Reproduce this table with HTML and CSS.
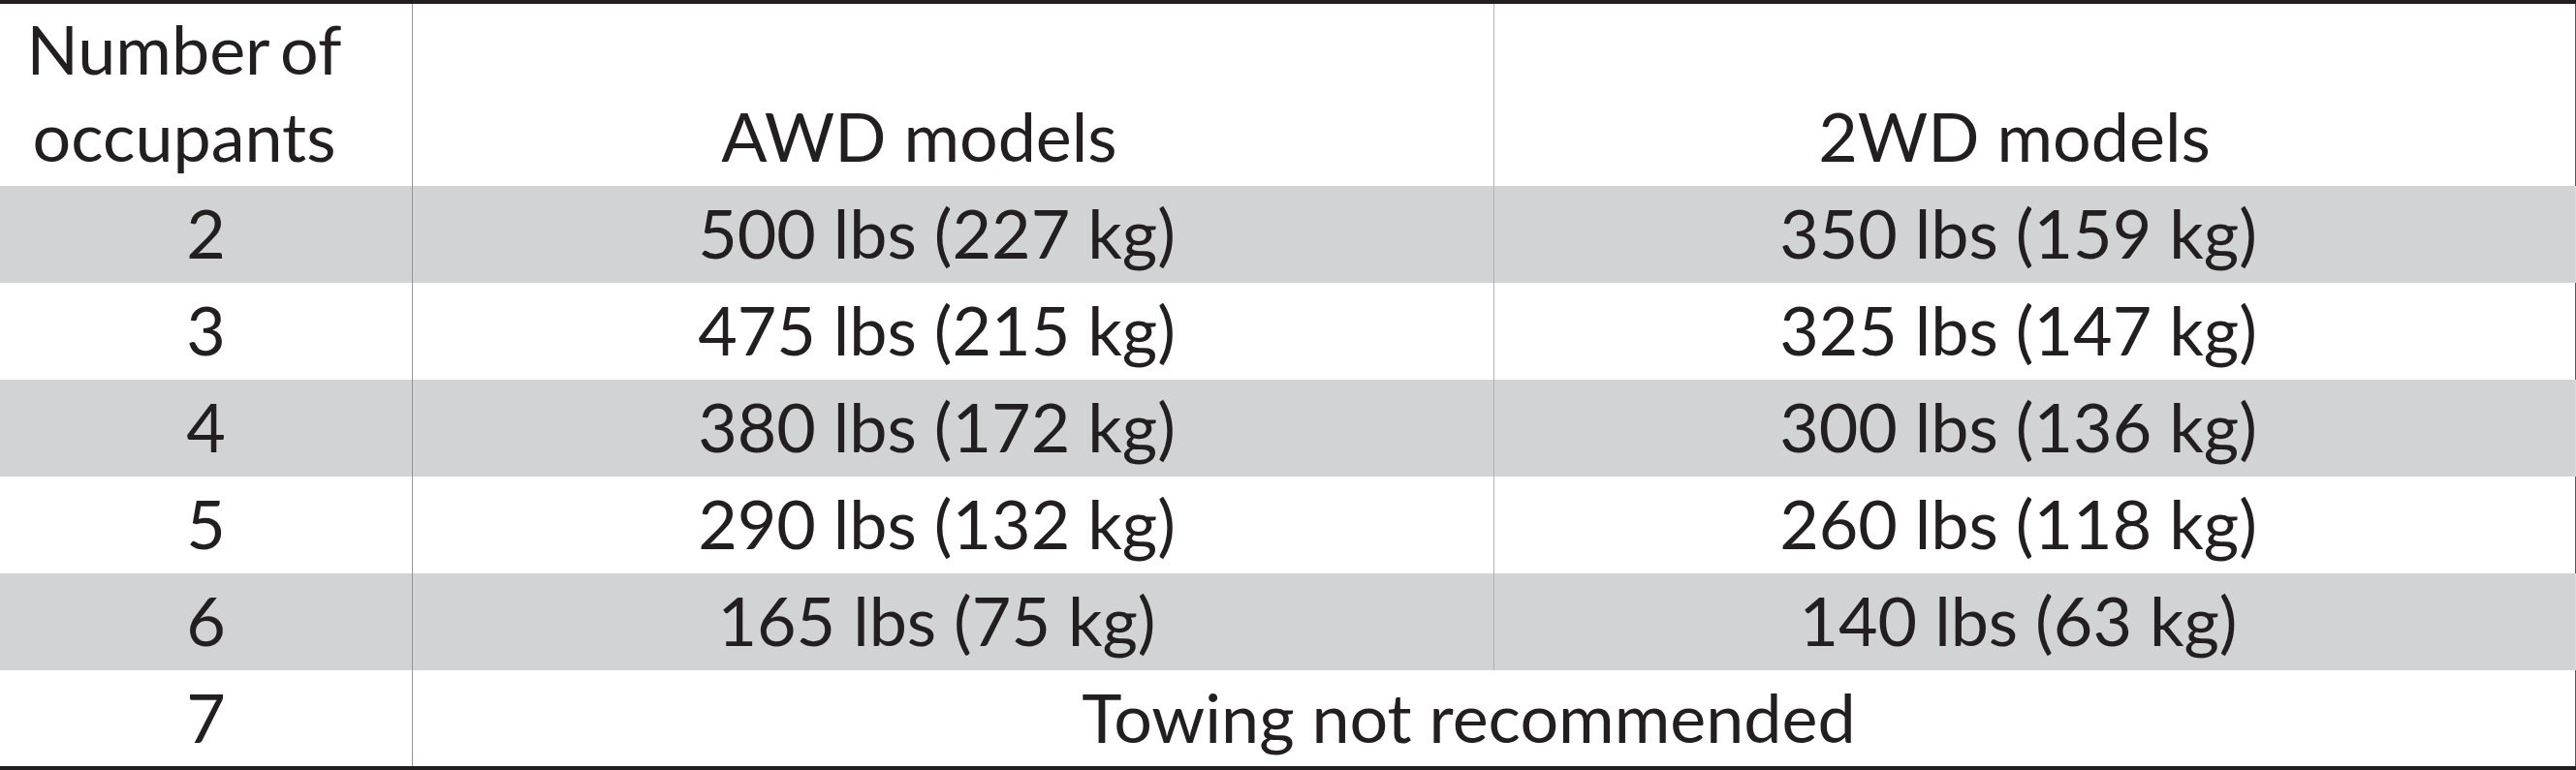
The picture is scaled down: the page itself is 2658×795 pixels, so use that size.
FILE: index.html
```html
<!DOCTYPE html>
<html lang="en">

<head>
  <meta charset="UTF-8">
  <meta name="viewport" content="width=device-width, initial-scale=1.0">
  <title>Towing capacity by occupants</title>
  <link rel="stylesheet" href="styles.css">
</head>

<body>
  <div class="load-table">
    <div class="cell head head-first">Number of<br>occupants</div>
    <div class="cell head head-awd col-mid">AWD models</div>
    <div class="cell head head-2wd col-last">2WD models</div>

    <div class="cell first shaded">2</div>
    <div class="cell col-mid shaded">500 lbs (227 kg)</div>
    <div class="cell col-last shaded">350 lbs (159 kg)</div>

    <div class="cell first">3</div>
    <div class="cell col-mid">475 lbs (215 kg)</div>
    <div class="cell col-last">325 lbs (147 kg)</div>

    <div class="cell first shaded">4</div>
    <div class="cell col-mid shaded">380 lbs (172 kg)</div>
    <div class="cell col-last shaded">300 lbs (136 kg)</div>

    <div class="cell first">5</div>
    <div class="cell col-mid">290 lbs (132 kg)</div>
    <div class="cell col-last">260 lbs (118 kg)</div>

    <div class="cell first shaded">6</div>
    <div class="cell col-mid shaded">165 lbs (75 kg)</div>
    <div class="cell col-last shaded">140 lbs (63 kg)</div>

    <div class="cell first">7</div>
    <div class="cell col-mid col-span">Towing not recommended</div>
  </div>
</body>

</html>
```

FILE: styles.css
```css
body {
  margin: 0;
  background: #fff;
}

.load-table {
  display: grid;
  grid-template-columns: 425px 1116px 1117px;
  grid-template-rows: 188px repeat(5, 100px) 99px;
  border-top: 4px solid #231f20;
  border-bottom: 4px solid #231f20;
  font-family: Lato, "Open Sans", sans-serif;
  font-size: 70px;
  line-height: 1;
  color: #231f20;
}

.cell {
  display: flex;
  align-items: center;
  justify-content: center;
  text-align: center;
  padding: 0 34px 4px 0;
}

.first {
  padding-right: 0;
}

.col-mid {
  border-left: 1px solid #939598;
}

.col-last {
  border-left: 1px solid #b1b3b6;
  border-right: 1px solid #58595b;
}

.col-span {
  grid-column: 2 / 4;
  border-right: 1px solid #58595b;
  padding-right: 52px;
}

.shaded {
  background: #d1d3d4;
}

.shaded.col-last {
  border-right-color: #dcdddf;
}

.head {
  align-items: flex-end;
  line-height: 90px;
  padding-bottom: 7px;
}

.head-first {
  padding-right: 45px;
  word-spacing: -6px;
}

.head-awd {
  padding-right: 70px;
}

.head-2wd {
  padding-right: 42px;
}
```
